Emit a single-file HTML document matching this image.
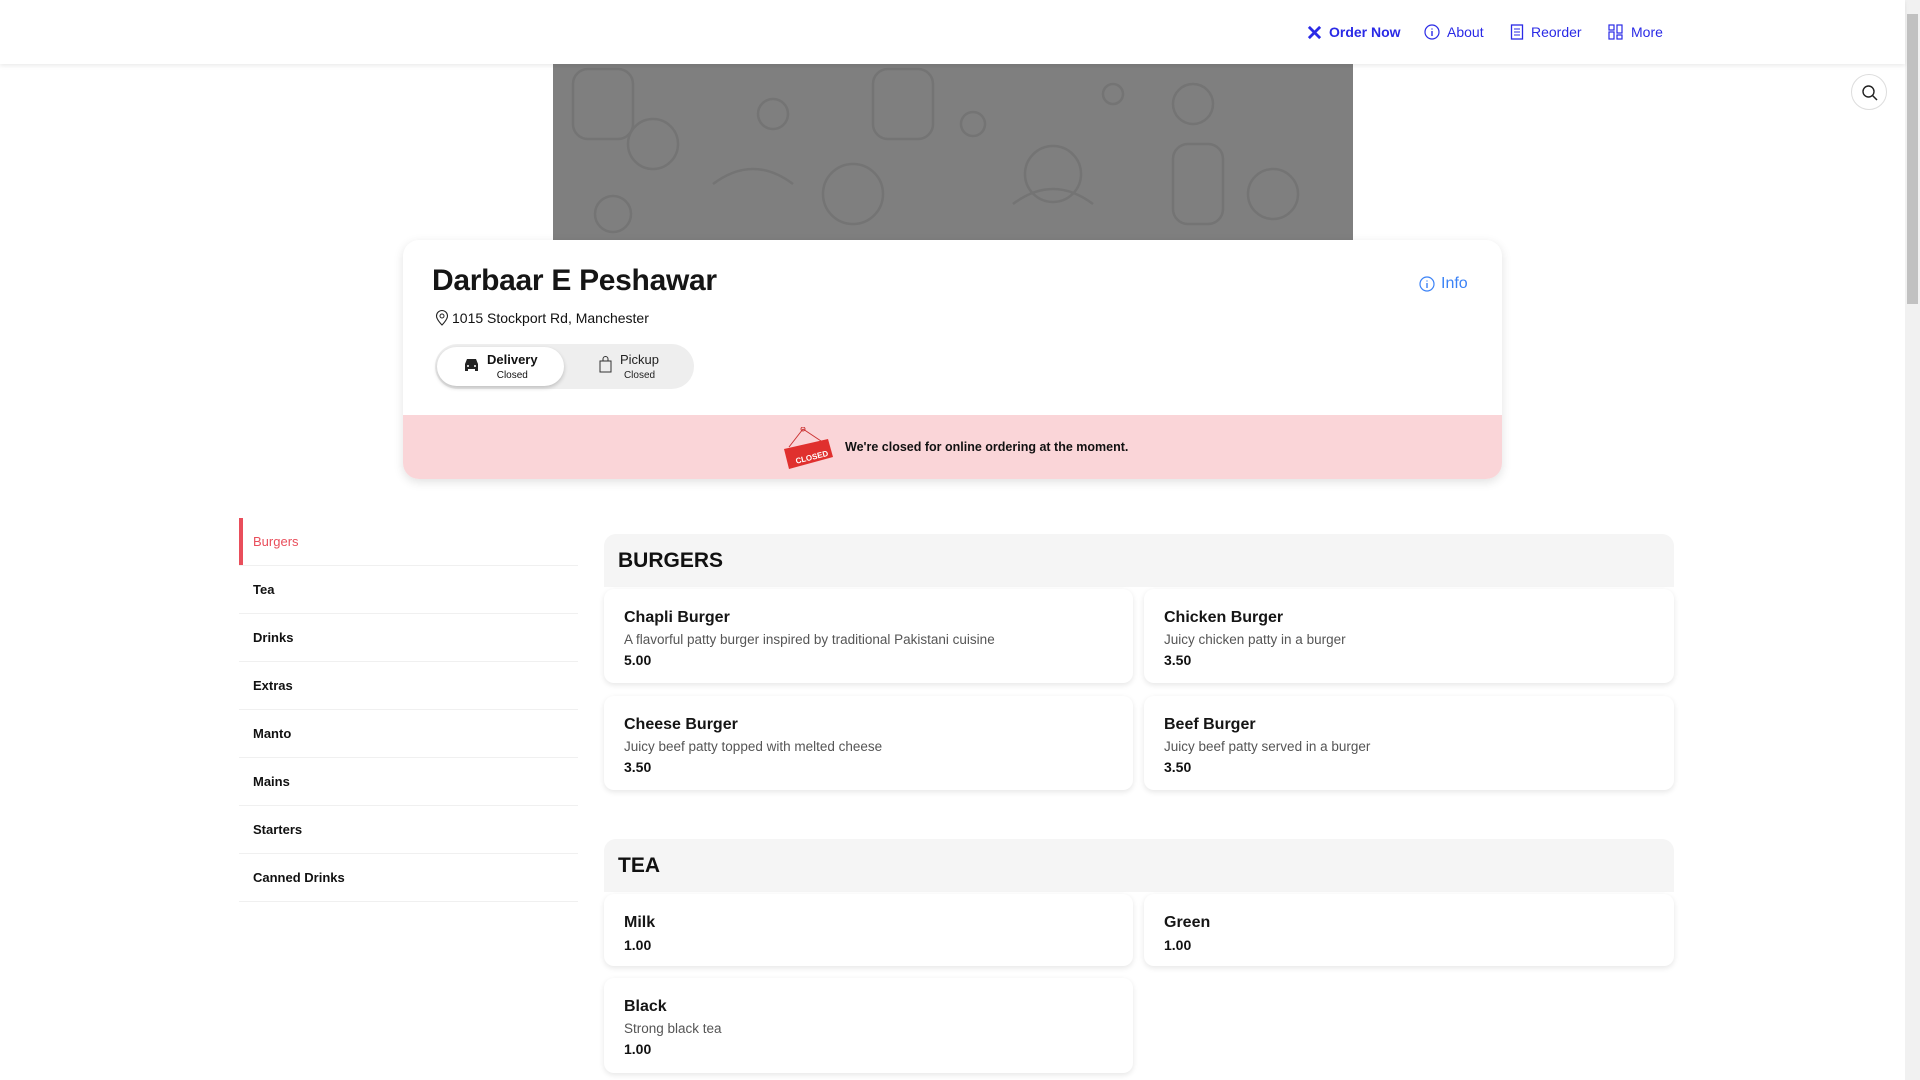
<!DOCTYPE html>
<html><head><meta charset="utf-8"><style>
*{box-sizing:border-box;margin:0;padding:0}
body{width:1920px;height:1080px;overflow:hidden;background:#fff;font-family:"Liberation Sans",sans-serif;color:#111;position:relative}
.a{position:absolute}
.nav{left:0;top:0;width:1905px;height:64px;background:#fff;box-shadow:0 2px 4px rgba(0,0,0,.08);z-index:5}
.ni{top:24px;font-size:14px;color:#2a2ae6;display:flex;align-items:center;gap:7px;white-space:nowrap}
.sb{left:1905px;top:0;width:15px;height:1080px;background:#f1f1f1}
.th{left:1907px;top:14px;width:11px;height:290px;background:#c1c1c1}
.card{left:403px;top:240px;width:1099px;height:239px;background:#fff;border-radius:16px;box-shadow:0 3px 10px rgba(0,0,0,.12);overflow:hidden}
.side{left:239px;width:339px;height:48px;border-bottom:1px solid #f0f0f0;font-size:13px;font-weight:bold;padding-left:14px;line-height:48px;color:#111}
.hd{left:604px;width:1070px;height:53px;background:#f5f5f5;border-radius:12px 12px 0 0;font-size:21px;font-weight:bold;padding-left:14px;line-height:53px}
.it{background:#fff;border-radius:10px;box-shadow:0 2px 6px rgba(0,0,0,.1);padding:20px 20px 0 20px}
.it b{display:block;font-size:16px;font-weight:bold;margin-bottom:5px;color:#151515}
.it p{font-size:13.5px;color:#555;margin-bottom:5px}
.it i{display:block;font-style:normal;font-weight:bold;font-size:14px}
</style></head><body>
<div class="a nav">
 <div class="a ni" style="left:1307px;font-weight:bold"><svg width="15" height="15" viewBox="0 0 16 16"><path d="M2 2l12 12M14 2L2 14" stroke="#2a2ae6" stroke-width="3"/></svg>Order Now</div>
 <div class="a ni" style="left:1424px"><svg width="16" height="16" viewBox="0 0 16 16"><circle cx="8" cy="8" r="7" fill="none" stroke="#2a2ae6" stroke-width="1.2"/><path d="M8 7v5M8 4.5v1" stroke="#2a2ae6" stroke-width="1.4"/></svg>About</div>
 <div class="a ni" style="left:1510px"><svg width="14" height="16" viewBox="0 0 14 16"><rect x="1.5" y="1" width="11" height="14" fill="none" stroke="#2a2ae6" stroke-width="1.3"/><path d="M4 5h6M4 8h6M4 11h6" stroke="#2a2ae6"/></svg>Reorder</div>
 <div class="a ni" style="left:1608px"><svg width="16" height="16" viewBox="0 0 16 16"><g fill="none" stroke="#2a2ae6" stroke-width="1.2"><rect x="1" y="1" width="5" height="5"/><rect x="1" y="8" width="5" height="7"/><rect x="9" y="1" width="5" height="8"/><rect x="9" y="11" width="5" height="4"/></g></svg>More</div>
</div>
<div class="a sb"></div><div class="a th"></div>
<svg class="a" style="left:553px;top:64px" width="800" height="176"><rect width="800" height="176" fill="#7f7f7f"/><g fill="none" stroke="#747474" stroke-width="2.5"><circle cx="220" cy="50" r="15"/><circle cx="100" cy="80" r="25"/><circle cx="300" cy="130" r="30"/><circle cx="420" cy="60" r="12"/><circle cx="500" cy="110" r="28"/><circle cx="640" cy="40" r="20"/><circle cx="720" cy="130" r="25"/><circle cx="60" cy="150" r="18"/><circle cx="560" cy="30" r="10"/><rect x="20" y="5" width="60" height="70" rx="15"/><rect x="320" y="5" width="60" height="70" rx="15"/><rect x="620" y="80" width="50" height="80" rx="15"/><path d="M160 120q40-30 80 0M460 140q40-30 80 0"/></g></svg>
<div class="a" style="left:1851px;top:74px;width:36px;height:36px;border-radius:50%;border:1px solid #ddd;background:#fff"><svg class="a" style="left:9px;top:9px" width="18" height="18" viewBox="0 0 18 18"><circle cx="7.5" cy="7.5" r="5.5" fill="none" stroke="#222" stroke-width="1.4"/><path d="M11.5 11.5l4.5 4.5" stroke="#222" stroke-width="1.5"/></svg></div>
<div class="a card">
 <div class="a" style="left:29px;top:24px;font-size:30px;font-weight:bold;color:#151515;letter-spacing:-0.3px">Darbaar E Peshawar</div>
 <div class="a" style="left:32px;top:69px;font-size:14px;display:flex;align-items:center;gap:3px"><svg width="14" height="17" viewBox="0 0 14 17"><path d="M7 16s-5.5-5.5-5.5-9a5.5 5.5 0 0111 0c0 3.5-5.5 9-5.5 9z" fill="none" stroke="#222" stroke-width="1.1"/><circle cx="7" cy="7" r="2" fill="none" stroke="#222"/></svg>1015 Stockport Rd, Manchester</div>
 <div class="a" style="left:1016px;top:35px;font-size:16px;color:#3b82f6;display:flex;align-items:center;gap:6px"><svg width="16" height="16" viewBox="0 0 16 16"><circle cx="8" cy="8" r="7" fill="none" stroke="#3b82f6" stroke-width="1.2"/><path d="M8 7v5M8 4.5v1" stroke="#3b82f6" stroke-width="1.4"/></svg>Info</div>
 <div class="a" style="left:32px;top:104px;width:259px;height:45px;background:#eee;border-radius:23px"></div>
 <div class="a" style="left:34px;top:107px;width:127px;height:39px;background:#fff;border-radius:20px;box-shadow:0 2px 4px rgba(0,0,0,.2)"></div>
 <svg class="a" style="left:60px;top:118px" width="17" height="15" viewBox="0 0 17 15"><path d="M2 6l2-5h9l2 5v7h-3v-2H5v2H2z" fill="#222"/><circle cx="5" cy="8" r="1" fill="#fff"/><circle cx="12" cy="8" r="1" fill="#fff"/></svg>
 <div class="a" style="left:84px;top:113px;text-align:center;font-size:13px;font-weight:bold;line-height:14px">Delivery<br><span style="font-size:10px;font-weight:normal">Closed</span></div>
 <svg class="a" style="left:196px;top:116px" width="13" height="17" viewBox="0 0 13 17"><rect x="1" y="5" width="11" height="11" fill="none" stroke="#333"/><path d="M4 5V3a2.5 2.5 0 015 0v2" fill="none" stroke="#333"/></svg>
 <div class="a" style="left:217px;top:113px;text-align:center;font-size:13px;line-height:14px;color:#222">Pickup<br><span style="font-size:10px">Closed</span></div>
 <div class="a" style="left:0;top:175px;width:1099px;height:64px;background:#fad5d8"></div>
 <svg class="a" style="left:378px;top:187px" width="54" height="44" viewBox="0 0 54 44"><path d="M22 2L8 20M22 2L40 14" stroke="#c33" stroke-width="1"/><circle cx="22" cy="2" r="2" fill="none" stroke="#c33"/><path d="M3 22l44-10 5 18-44 12z" fill="#e0302e"/><text x="14" y="34" font-size="8" font-weight="bold" fill="#fff" transform="rotate(-14 26 30)" font-family="Liberation Sans">CLOSED</text></svg>
 <div class="a" style="left:442px;top:200px;font-size:12.5px;font-weight:bold">We're closed for online ordering at the moment.</div>
</div>
<div class="a" style="left:239px;top:518px;width:4px;height:48px;background:#e94e5b"></div>
<div class="a side" style="top:518px;color:#e94e5b;font-weight:normal">Burgers</div>
<div class="a side" style="top:566px">Tea</div>
<div class="a side" style="top:614px">Drinks</div>
<div class="a side" style="top:662px">Extras</div>
<div class="a side" style="top:710px">Manto</div>
<div class="a side" style="top:758px">Mains</div>
<div class="a side" style="top:806px">Starters</div>
<div class="a side" style="top:854px">Canned Drinks</div>
<div class="a hd" style="top:534px">BURGERS</div>
<div class="a it" style="left:604px;top:589px;width:529px;height:94px"><b>Chapli Burger</b><p>A flavorful patty burger inspired by traditional Pakistani cuisine</p><i>5.00</i></div>
<div class="a it" style="left:1144px;top:589px;width:530px;height:94px"><b>Chicken Burger</b><p>Juicy chicken patty in a burger</p><i>3.50</i></div>
<div class="a it" style="left:604px;top:696px;width:529px;height:94px"><b>Cheese Burger</b><p>Juicy beef patty topped with melted cheese</p><i>3.50</i></div>
<div class="a it" style="left:1144px;top:696px;width:530px;height:94px"><b>Beef Burger</b><p>Juicy beef patty served in a burger</p><i>3.50</i></div>
<div class="a hd" style="top:839px">TEA</div>
<div class="a it" style="left:604px;top:894px;width:529px;height:72px"><b>Milk</b><i>1.00</i></div>
<div class="a it" style="left:1144px;top:894px;width:530px;height:72px"><b>Green</b><i>1.00</i></div>
<div class="a it" style="left:604px;top:978px;width:529px;height:95px"><b>Black</b><p>Strong black tea</p><i>1.00</i></div>
</body></html>
